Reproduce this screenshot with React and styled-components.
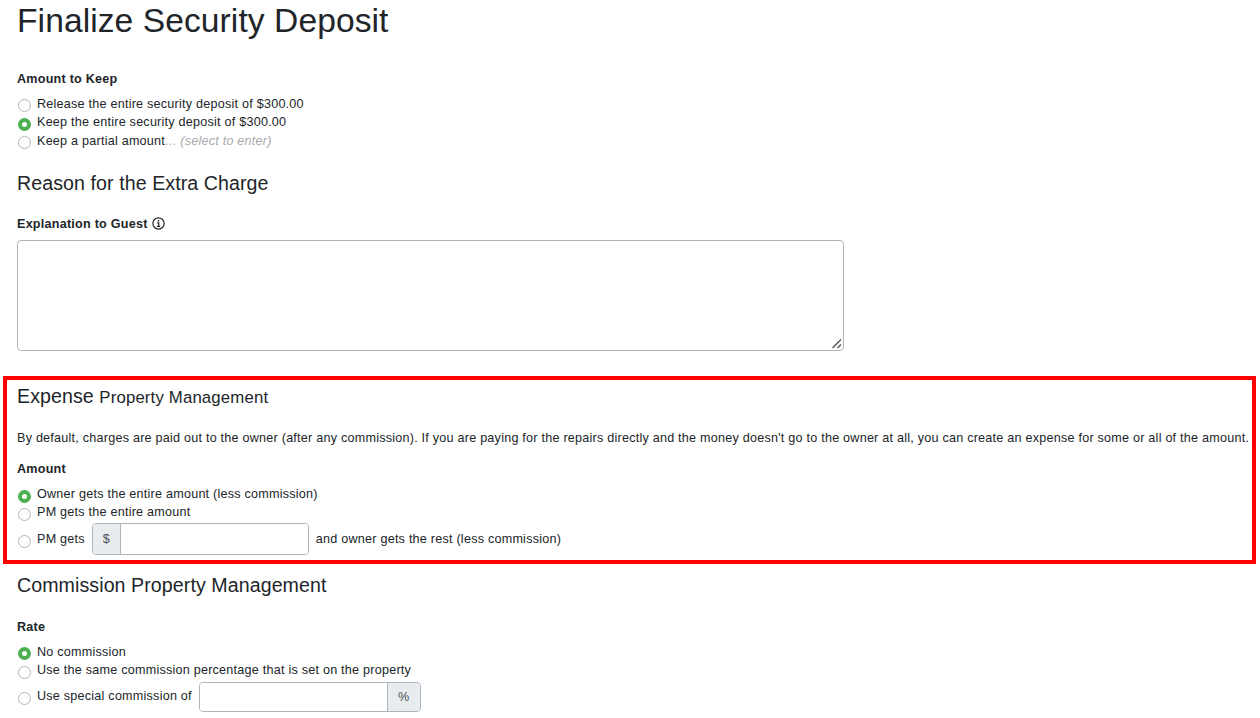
import styled, { createGlobalStyle } from "styled-components";

const GlobalStyle = createGlobalStyle`
  html, body {
    margin: 0;
    padding: 0;
    background: #fff;
  }
  body {
    font-family: "Liberation Sans", Arial, sans-serif;
    font-size: 12.6px;
    line-height: 18px;
    color: #212529;
    overflow: hidden;
  }
`;

const Page = styled.div`
  width: 1260px;
  height: 718px;
  overflow: hidden;
  box-sizing: border-box;
`;

const Section = styled.section`
  padding: 0 17px;
`;

const Title = styled.h1`
  margin: 0;
  font-size: 33.6px;
  font-weight: 400;
  line-height: 42px;
  letter-spacing: 0.08px;
`;

const Heading = styled.h3`
  margin: ${(p) => p.$top || 0}px 0 0;
  font-size: 19.6px;
  font-weight: 400;
  line-height: 24px;
  letter-spacing: 0.08px;
`;

const SubHeading = styled.span`
  font-size: 16.8px;
  letter-spacing: 0.15px;
`;

const FieldLabel = styled.div`
  display: flex;
  align-items: center;
  gap: 4px;
  font-weight: 700;
  line-height: 18px;
  letter-spacing: 0.23px;
  margin-top: ${(p) => p.$top}px;
`;

const RadioList = styled.div`
  --dot-top: ${(p) => p.$dotTop || 4.5}px;
  display: flex;
  flex-direction: column;
  margin-top: ${(p) => p.$top}px;
`;

const RadioRow = styled.label`
  display: flex;
  align-items: ${(p) => (p.$withInput ? "center" : "flex-start")};
  height: ${(p) => p.$height || 18.5}px;
  letter-spacing: 0.23px;
  white-space: nowrap;
`;

const RadioDot = styled.span`
  flex: none;
  width: 13px;
  height: 13px;
  box-sizing: border-box;
  margin: ${(p) => (p.$withInput ? "5px" : "var(--dot-top)")} 6px 0 1px;
  border-radius: 50%;
  border: ${(p) => (p.$checked ? "4px solid #4caf50" : "1px solid #adb5bd")};
  background: #fff;
`;

const Hint = styled.span`
  color: #aaa;
`;

const HintNote = styled.em`
  margin-left: 4px;
`;

const TextAreaWrap = styled.div`
  position: relative;
  width: 827px;
  height: 111px;
  margin-top: 7px;
`;

const TextArea = styled.textarea`
  display: block;
  box-sizing: border-box;
  width: 100%;
  height: 100%;
  border: 1px solid #adb5bd;
  border-radius: 4px;
  background: #fff;
  resize: none;
`;

const Grip = styled.svg`
  position: absolute;
  right: 2px;
  bottom: 2px;
  pointer-events: none;
`;

const Highlight = styled.section`
  box-sizing: border-box;
  width: 1253px;
  height: 188px;
  margin: 25px 0 0 3px;
  padding: 4px 0 0 10px;
  border: 4px solid #f00;
`;

const Intro = styled.p`
  margin: 19px 0 0;
  line-height: 18px;
  letter-spacing: 0.23px;
  white-space: nowrap;
`;

const InputGroup = styled.span`
  display: inline-flex;
  width: ${(p) => p.$width}px;
  height: ${(p) => p.$height}px;
  margin: ${(p) => p.$lift}px ${(p) => p.$right}px 0 7px;
  box-sizing: border-box;
  border: 1px solid #adb5bd;
  border-radius: 4px;
  overflow: hidden;
`;

const Addon = styled.span`
  flex: none;
  display: flex;
  align-items: center;
  justify-content: center;
  width: ${(p) => (p.$after ? 33 : 28)}px;
  box-sizing: border-box;
  color: #495057;
  background: #e9ecef;
  border-right: ${(p) => (p.$after ? "none" : "1px solid #adb5bd")};
  border-left: ${(p) => (p.$after ? "1px solid #adb5bd" : "none")};
`;

const AmountInput = styled.input`
  flex: 1;
  min-width: 0;
  border: 0;
  padding: 0;
  background: #fff;
`;

const InfoIcon = () => (
  <svg width="13" height="13" viewBox="0 0 13 13" fill="none" stroke="#212529">
    <circle cx="6.5" cy="6.5" r="5.6" strokeWidth="1.2" />
    <path d="M5.2 5.8h1.5v3.4M4.8 9.3h3.4" strokeWidth="1.2" />
    <path d="M6.5 3v1.5" strokeWidth="1.5" />
  </svg>
);

const Radio = ({ checked, withInput, height, children }) => (
  <RadioRow $withInput={withInput} $height={height}>
    <RadioDot $checked={checked} $withInput={withInput} />
    {children}
  </RadioRow>
);

export default function App() {
  return (
    <Page>
      <GlobalStyle />
      <Section>
        <Title>Finalize Security Deposit</Title>
        <FieldLabel $top={28}>Amount to Keep</FieldLabel>
        <RadioList $top={6.75}>
          <Radio>Release the entire security deposit of $300.00</Radio>
          <Radio checked>Keep the entire security deposit of $300.00</Radio>
          <Radio>
            Keep a partial amount
            <Hint>
              ...<HintNote>(select to enter)</HintNote>
            </Hint>
          </Radio>
        </RadioList>
        <Heading $top={20.25}>Reason for the Extra Charge</Heading>
        <FieldLabel $top={20}>
          Explanation to Guest <InfoIcon />
        </FieldLabel>
        <TextAreaWrap>
          <TextArea />
          <Grip width="11" height="11" viewBox="0 0 11 11" stroke="#555" strokeWidth="1.4">
            <path d="M1.5 10L10 1.5M6.5 10L10 6.5" />
          </Grip>
        </TextAreaWrap>
      </Section>
      <Highlight>
        <Heading>
          Expense <SubHeading>Property Management</SubHeading>
        </Heading>
        <Intro>
          By default, charges are paid out to the owner (after any commission).
          If you are paying for the repairs directly and the money doesn't go to
          the owner at all, you can create an expense for some or all of the
          amount.
        </Intro>
        <FieldLabel $top={13}>Amount</FieldLabel>
        <RadioList $top={7} $dotTop={5.25}>
          <Radio checked>Owner gets the entire amount (less commission)</Radio>
          <Radio>PM gets the entire amount</Radio>
          <Radio withInput height={34}>
            PM gets
            <InputGroup $width={217} $height={32} $lift={0} $right={7}>
              <Addon>$</Addon>
              <AmountInput />
            </InputGroup>
            and owner gets the rest (less commission)
          </Radio>
        </RadioList>
      </Highlight>
      <Section>
        <Heading $top={9}>Commission Property Management</Heading>
        <FieldLabel $top={21}>Rate</FieldLabel>
        <RadioList $top={7}>
          <Radio checked>No commission</Radio>
          <Radio>Use the same commission percentage that is set on the property</Radio>
          <Radio withInput height={32}>
            Use special commission of
            <InputGroup $width={222} $height={30} $lift={2} $right={0}>
              <AmountInput />
              <Addon $after>%</Addon>
            </InputGroup>
          </Radio>
        </RadioList>
      </Section>
    </Page>
  );
}
